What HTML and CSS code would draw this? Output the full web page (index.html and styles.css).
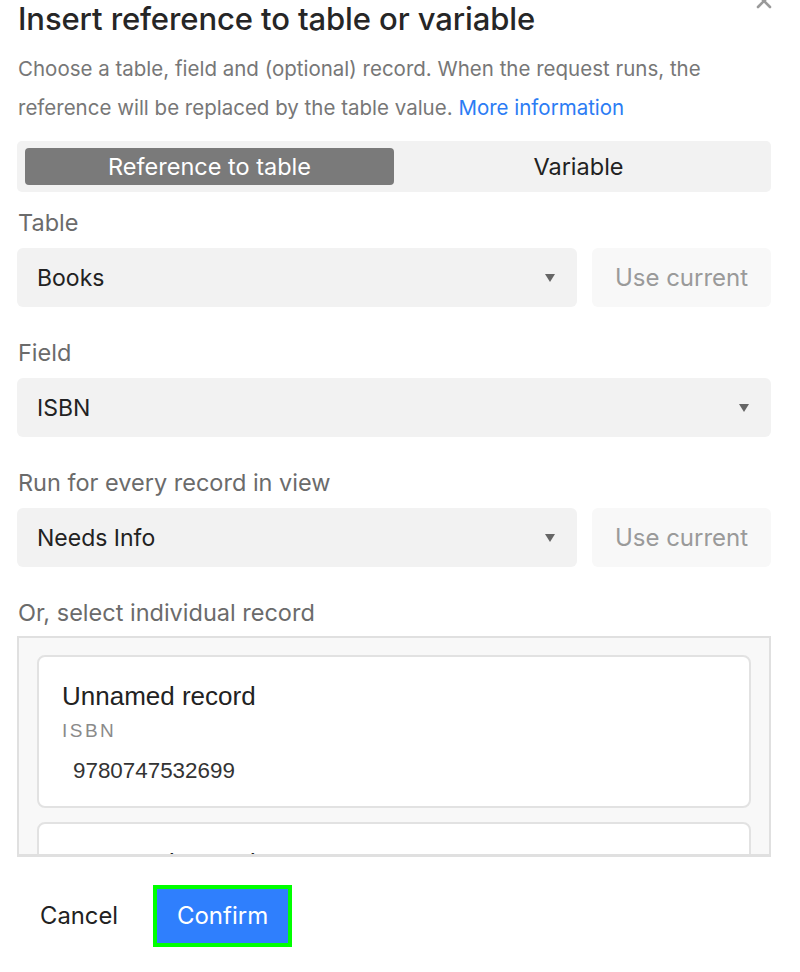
FILE: index.html
```html
<!DOCTYPE html>
<html>
<head>
<meta charset="utf-8">
<link rel="stylesheet" href="styles.css">
</head>
<body>
<div class="dialog">
  <button class="close" aria-label="Close">
    <svg width="16" height="16" viewBox="0 0 16 16"><path d="M2 2 L14 14 M14 2 L2 14" stroke="#9a9a9a" stroke-width="2.6" stroke-linecap="round"/></svg>
  </button>
  <h1 class="title">Insert reference to table or variable</h1>
  <p class="intro">Choose a table, field and (optional) record. When the request runs, the reference will be replaced by the table value. <a class="link">More information</a></p>

  <div class="segment">
    <div class="seg seg-active">Reference to table</div>
    <div class="seg">Variable</div>
  </div>

  <div class="label">Table</div>
  <div class="row">
    <div class="select"><span>Books</span><span class="caret"></span></div>
    <div class="btn-current">Use current</div>
  </div>

  <div class="label">Field</div>
  <div class="row">
    <div class="select"><span>ISBN</span><span class="caret"></span></div>
  </div>

  <div class="label">Run for every record in view</div>
  <div class="row">
    <div class="select"><span>Needs Info</span><span class="caret"></span></div>
    <div class="btn-current">Use current</div>
  </div>

  <div class="label label-last">Or, select individual record</div>
  <div class="records">
    <div class="card">
      <div class="card-title">Unnamed record</div>
      <div class="card-field">ISBN</div>
      <div class="card-value">9780747532699</div>
    </div>
    <div class="card">
      <div class="card-title">Unnamed record</div>
      <div class="card-field">ISBN</div>
      <div class="card-value">9780747532699</div>
    </div>
  </div>

  <div class="footer">
    <button class="cancel">Cancel</button>
    <button class="confirm">Confirm</button>
  </div>
</div>
</body>
</html>
```

FILE: styles.css
```css
* { box-sizing: border-box; }
html, body { margin: 0; padding: 0; background: #fff; }
body { font-family: Inter, "Liberation Sans", sans-serif; color: #222; }

.dialog {
  position: relative;
  width: 800px;
  height: 972px;
  overflow: hidden;
  padding: 0 29px 0 17px;
  display: flex;
  flex-direction: column;
}

.close {
  position: absolute;
  top: -7px;
  right: 28px;
  border: 0;
  background: none;
  padding: 0;
}

.title {
  margin: 0;
  padding-left: 1px;
  font-size: 31px;
  line-height: 37px;
  font-weight: 500;
  color: #262626;
  letter-spacing: -0.1px;
}

.intro {
  margin: 12px 0 0 1px;
  font-size: 20.5px;
  line-height: 39px;
  color: #777;
}
.link { color: #2b7cf4; }

.segment {
  flex: none;
  display: grid;
  grid-template-columns: 1fr 1fr;
  margin-top: 14px;
  background: #f2f2f2;
  border-radius: 5px;
  padding: 7px 8px;
  height: 51px;
}
.seg {
  display: flex;
  align-items: center;
  justify-content: center;
  font-size: 23.5px;
  color: #222;
  border-radius: 4px;
}
.seg-active {
  background: #7a7a7a;
  color: #fff;
}

.label {
  font-size: 23.5px;
  color: #6b6b6b;
  line-height: 28px;
  margin-top: 17px;
  margin-left: 1px;
}
.label-last { margin-bottom: -1px; }

.row {
  flex: none;
  display: flex;
  gap: 15px;
  margin-top: 11px;
  margin-bottom: 15px;
}
.select {
  flex: 1;
  height: 59px;
  background: #f2f2f2;
  border-radius: 6px;
  display: flex;
  align-items: center;
  justify-content: space-between;
  padding: 0 22px 0 20px;
  font-size: 23px;
  color: #222;
}
.caret {
  width: 0; height: 0;
  border-left: 5.5px solid transparent;
  border-right: 5.5px solid transparent;
  border-top: 8px solid #666;
}
.btn-current {
  width: 179px;
  height: 59px;
  background: #f8f8f8;
  border-radius: 6px;
  display: flex;
  align-items: center;
  justify-content: center;
  font-size: 24px;
  color: #9a9a9a;
}

.records {
  flex: none;
  margin-top: 10px;
  height: 221px;
  overflow: hidden;
  border: 2px solid #e0e0e0;
  border-bottom-width: 3px;
  background: #f8f8f8;
  padding: 17px 18px 0 18px;
  display: flex;
  flex-direction: column;
  gap: 14px;
}
.card {
  flex: none;
  height: 153px;
  background: #fff;
  border: 2px solid #e2e2e2;
  border-radius: 8px;
  padding: 24px 23px 0 23px;
  font-family: "Liberation Sans", Arial, sans-serif;
}
.card-title { font-size: 26px; color: #222; line-height: 30px; }
.card-field { font-size: 19px; color: #8a8a8a; letter-spacing: 2.5px; margin-top: 9px; line-height: 22px; }
.card-value { font-size: 22.4px; color: #333; margin-top: 16px; margin-left: 11px; line-height: 26px; }

.footer {
  flex: none;
  display: flex;
  align-items: center;
  margin-top: 28px;
}
.cancel {
  border: 0;
  background: none;
  font-family: Inter, "Liberation Sans", sans-serif;
  font-size: 23.8px;
  line-height: 30px;
  color: #222;
  padding: 0 0 0 23px;
  margin-right: 35px;
}
.confirm {
  width: 139px;
  height: 62px;
  border: 4px solid #00ff00;
  background: #2f7ffd;
  color: #fff;
  font-family: Inter, "Liberation Sans", sans-serif;
  font-size: 24px;
  line-height: 30px;
  padding: 0;
}
```
